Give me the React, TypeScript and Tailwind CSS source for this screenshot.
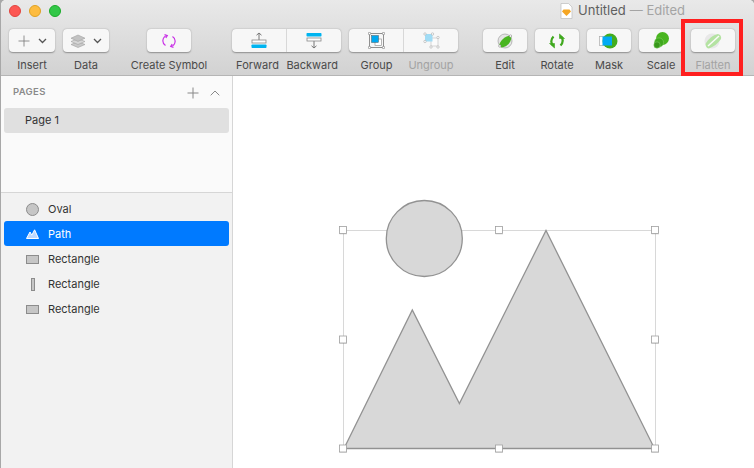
const font = { fontFamily: "Inter, 'Liberation Sans', sans-serif" };

function Btn({ w = 44, className = "", children }: { w?: number; className?: string; children?: React.ReactNode }) {
  return <div className={`h-[23px] bg-[#f7f7f7] rounded-[4px] shadow-[0_0.5px_1.5px_rgba(0,0,0,0.35)] flex items-center justify-center ${className}`} style={{ width: w }}>{children}</div>;
}

function Item({ label, dim, children, className = "" }: { label: string; dim?: boolean; children?: React.ReactNode; className?: string }) {
  return (
    <div className={`flex flex-col items-center w-[44px] ${className}`}>
      <Btn>{children}</Btn>
      <span className={`mt-[6px] text-[11px] leading-[14px] whitespace-nowrap ${dim ? "text-[#a3a3a3]" : "text-[#4a4a4a]"}`}>{label}</span>
    </div>
  );
}

function Chevron() {
  return <svg width="9" height="6" viewBox="0 0 9 6"><path d="M1 1l3.5 3.5L8 1" fill="none" stroke="#555" strokeWidth="1.3" /></svg>;
}

function Row({ label, icon, active }: { label: string; icon: React.ReactNode; active?: boolean }) {
  return (
    <div className={`h-[25px] mx-[3px] rounded-[3px] flex items-center pt-[1px] ${active ? "bg-[#007aff] text-white" : "text-[#333]"}`}>
      <div className="w-[13px] ml-[22px] flex justify-center">{icon}</div>
      <span className="ml-[9px] text-[11px]">{label}</span>
    </div>
  );
}

export default function App() {
  return (
    <div className="w-[754px] h-[468px] bg-[#a8a8a8] overflow-hidden pl-[1px]" style={font}>
      <div className="h-full rounded-t-[5px] overflow-hidden flex flex-col bg-white">
        <div className="h-[76px] shrink-0 bg-gradient-to-b from-[#e9e9e9] to-[#d2d2d2] border-b border-[#b5b5b5] relative">
          <div className="flex items-center gap-[8px] pl-[8px] h-[22px]">
            <div className="w-[12px] h-[12px] rounded-full bg-[#fc5753] border border-[#e0443e]" />
            <div className="w-[12px] h-[12px] rounded-full bg-[#fdbc40] border border-[#dea123]" />
            <div className="w-[12px] h-[12px] rounded-full bg-[#33c748] border border-[#1aab29]" />
            <div className="ml-auto mr-[69px] flex items-center text-[13px]">
              <svg width="13" height="16" viewBox="0 0 13 16" className="mr-[5px]">
                <path d="M1 .5h7.5L12 4v11.5H1z" fill="#fff" stroke="#bbb" strokeWidth=".7" />
                <path d="M3.5 6.5h6L11 8.5 6.5 13 2 8.5z" fill="#f5a623" />
              </svg>
              <span className="text-[#5f5f5f]">Untitled</span>
              <span className="text-[#a4a4a4] ml-[4px]">— Edited</span>
            </div>
          </div>
          <div className="flex pl-[8px] mt-[7px]">
            <div className="flex flex-col items-center w-[46px]">
              <Btn w={46} className="gap-[8px] pl-[1px]">
                <svg width="12" height="12" viewBox="0 0 12 12"><path d="M6 .5v11M.5 6h11" stroke="#777" strokeWidth=".8" /></svg>
                <Chevron />
              </Btn>
              <span className="mt-[6px] text-[11px] leading-[14px] text-[#4a4a4a]">Insert</span>
            </div>
            <div className="flex flex-col items-center w-[46px] ml-[8px]">
              <Btn w={46} className="gap-[7px]">
                <svg width="16" height="14" viewBox="0 0 16 14">
                  <path d="M8 7.5l7 3-7 3-7-3z" fill="#c8c8c8" stroke="#a0a0a0" strokeWidth=".6" />
                  <path d="M8 4.5l7 3-7 3-7-3z" fill="#d6d6d6" stroke="#a0a0a0" strokeWidth=".6" />
                  <path d="M8 1l7 3.2-7 3.2-7-3.2z" fill="#c2c2c2" stroke="#a0a0a0" strokeWidth=".6" />
                </svg>
                <Chevron />
              </Btn>
              <span className="mt-[6px] text-[11px] leading-[14px] text-[#4a4a4a]">Data</span>
            </div>
            <Item label="Create Symbol" className="ml-[38px]">
              <svg width="14" height="14" viewBox="0 0 14 14" fill="none" stroke="#c931e6" strokeWidth="1.2">
                <path d="M5 1.5A5.5 5.5 0 0 0 3.5 11.5" />
                <path d="M9 12.5A5.5 5.5 0 0 0 10.5 2.5" />
                <path d="M2.5 .6L5.3 1.5 3.8 4M11.5 13.4L8.7 12.5 10.2 10" />
              </svg>
            </Item>
            <div className="flex flex-col ml-[41px]">
              <div className="flex h-[23px] w-[109px] rounded-[4px] bg-[#f7f7f7] shadow-[0_0.5px_1.5px_rgba(0,0,0,0.35)]">
                <div className="w-[55px] border-r border-[#d8d8d8] flex items-center justify-center">
                  <svg width="16" height="17" viewBox="0 0 16 17">
                    <path d="M8 9V1M5.5 3.2L8 1l2.5 2.2" fill="none" stroke="#777" strokeWidth="1" />
                    <rect x="1" y="8" width="14" height="3" fill="#fff" stroke="#888" strokeWidth=".8" />
                    <rect x=".5" y="12.5" width="15" height="3.5" rx=".7" fill="#00b4f0" />
                  </svg>
                </div>
                <div className="flex-1 flex items-center justify-center">
                  <svg width="16" height="17" viewBox="0 0 16 17">
                    <path d="M8 8v8M5.5 13.8L8 16l2.5-2.2" fill="none" stroke="#777" strokeWidth="1" />
                    <rect x="1" y="6" width="14" height="3" fill="#fff" stroke="#888" strokeWidth=".8" />
                    <rect x=".5" y="1" width="15" height="3.5" rx=".7" fill="#00b4f0" />
                  </svg>
                </div>
              </div>
              <div className="flex mt-[6px] text-[11px] leading-[14px] text-[#4a4a4a]">
                <span className="w-[51px] text-center">Forward</span>
                <span className="w-[58px] text-right pr-[3px]">Backward</span>
              </div>
            </div>
            <div className="flex flex-col ml-[8px]">
              <div className="flex h-[23px] w-[109px] rounded-[4px] bg-[#f7f7f7] shadow-[0_0.5px_1.5px_rgba(0,0,0,0.35)]">
                <div className="w-[55px] border-r border-[#d8d8d8] flex items-center justify-center">
                  <svg width="17" height="17" viewBox="0 0 17 17">
                    <rect x="1.5" y="1.5" width="14" height="14" fill="none" stroke="#777" strokeWidth=".8" />
                    <rect x="7" y="7" width="6.5" height="6.5" fill="#fff" stroke="#999" strokeWidth=".7" />
                    <rect x="3.5" y="3.5" width="7" height="7" fill="#00a8f0" stroke="#444" strokeWidth=".4" />
                    {[[1.5, 1.5], [15.5, 1.5], [1.5, 15.5], [15.5, 15.5]].map(([x, y]) => <circle key={x * 10 + y} cx={x} cy={y} r="1.2" fill="#fff" stroke="#666" strokeWidth=".6" />)}
                  </svg>
                </div>
                <div className="flex-1 flex items-center justify-center">
                  <svg width="17" height="17" viewBox="0 0 17 17" opacity=".5">
                    <rect x="8" y="6" width="7" height="8" fill="#fff" stroke="#999" strokeWidth=".7" />
                    <rect x="2" y="2" width="7.5" height="7.5" fill="#4cc3f5" />
                    {[[2, 2], [9.5, 2], [2, 9.5], [15, 5.5], [8, 15], [15, 15]].map(([x, y]) => <circle key={x * 10 + y} cx={x} cy={y} r="1.2" fill="#fff" stroke="#666" strokeWidth=".6" />)}
                  </svg>
                </div>
              </div>
              <div className="flex mt-[6px] text-[11px] leading-[14px]">
                <span className="w-[55px] text-center text-[#4a4a4a]">Group</span>
                <span className="w-[54px] text-center text-[#a3a3a3]">Ungroup</span>
              </div>
            </div>
            <Item label="Edit" className="ml-[25px]">
              <svg width="16" height="16" viewBox="0 0 16 16">
                <circle cx="8" cy="8" r="7" fill="#e4e4e4" stroke="#a0a0a0" strokeWidth=".7" />
                <path d="M2 13C2.5 8 8.5 2.5 14 2.5 15.5 8.5 10 14.5 4 14.5z" fill="#49b520" />
                <circle cx="2.8" cy="13" r="1.2" fill="#fff" stroke="#777" strokeWidth=".5" />
                <circle cx="13.5" cy="3" r="1.2" fill="#fff" stroke="#777" strokeWidth=".5" />
              </svg>
            </Item>
            <Item label="Rotate" className="ml-[8px]">
              <svg width="16" height="16" viewBox="0 0 16 16" fill="none" stroke="#3fa81e" strokeWidth="2.2">
                <path d="M4.5 3.5C2 6 2 9.5 3.5 12" />
                <path d="M11.5 12.5C14 10 14 6.5 12.5 4" />
                <path d="M.5 10.5h5v4.5zM15.5 5.5h-5V1z" fill="#3fa81e" strokeWidth=".6" />
              </svg>
            </Item>
            <Item label="Mask" className="ml-[8px]">
              <svg width="20" height="16" viewBox="0 0 20 16" className="ml-[-1px]">
                <rect x=".5" y="3.5" width="9" height="9" fill="#fff" stroke="#aaa" strokeWidth=".7" />
                <circle cx="11" cy="8" r="7.5" fill="#43ad1f" />
                <rect x="3.5" y="3.5" width="9.5" height="9" fill="#00aaf5" />
              </svg>
            </Item>
            <Item label="Scale" className="ml-[8px]">
              <svg width="16" height="17" viewBox="0 0 16 17">
                <circle cx="9.5" cy="6.5" r="6.5" fill="#49b520" />
                <circle cx="6" cy="10.5" r="4.6" fill="#3fa81e" stroke="#8ad470" strokeWidth=".5" />
                <circle cx="4" cy="13" r="3.2" fill="#37981a" stroke="#8ad470" strokeWidth=".5" />
              </svg>
            </Item>
            <Item label="Flatten" dim className="ml-[8px]">
              <svg width="18" height="16" viewBox="0 0 18 16" opacity=".55">
                <circle cx="8" cy="8" r="7.5" fill="#dcdcdc" />
                <path d="M1.5 11C4 6 9 2 14 1c2.5.5 3.5 2.5 3 5-3 4.500-7 7.500-12 9.500C3 15.500 1.500 13.500 1.500 11z" fill="#7fd35e" />
                <path d="M4 13L15 3" stroke="#fff" strokeWidth="1.500" />
              </svg>
            </Item>
          </div>
          <div className="absolute left-[680px] top-[19px] w-[62px] h-[57px] border-[4px] border-[#ff1f1f]" />
        </div>
        <div className="flex-1 flex min-h-0">
          <div className="w-[232px] shrink-0 border-r border-[#d6d6d6] flex flex-col">
            <div className="h-[117px] shrink-0 bg-[#fafafa] border-b border-[#d6d6d6]">
              <div className="h-[32px] flex items-center pl-[12px] pr-[12px] pt-[1px] text-[#8a8a8a]">
                <span className="text-[9.5px] font-semibold tracking-[0.35px]">PAGES</span>
                <svg width="12" height="12" viewBox="0 0 12 12" className="ml-auto"><path d="M6 .5v11M.5 6h11" stroke="#888" strokeWidth="1" /></svg>
                <svg width="10" height="6" viewBox="0 0 10 6" className="ml-[11px]"><path d="M.7 5.300L5 1l4.300 4.300" fill="none" stroke="#888" strokeWidth="1" /></svg>
              </div>
              <div className="mx-[3px] h-[25px] rounded-[3px] bg-[#e0e0e0] flex items-center pl-[21px] text-[11px] text-[#333]">Page 1</div>
            </div>
            <div className="flex-1 bg-[#f2f2f2] pt-[3px]">
              <Row label="Oval" icon={<div className="w-[13px] h-[13px] rounded-full bg-[#c6c6c6] border border-[#8c8c8c]" />} />
              <Row label="Path" active icon={<svg width="13" height="10" viewBox="0 0 13 10"><path d="M.5 9.500L4 3l1.800 3.200L8.600.8 12.500 9.500z" fill="#bcd8ff" stroke="#fff" strokeWidth="1" /></svg>} />
              <Row label="Rectangle" icon={<div className="w-[13px] h-[9px] bg-[#c6c6c6] border border-[#8c8c8c]" />} />
              <Row label="Rectangle" icon={<div className="w-[4px] h-[13px] bg-[#c6c6c6] border border-[#8c8c8c]" />} />
              <Row label="Rectangle" icon={<div className="w-[13px] h-[9px] bg-[#c6c6c6] border border-[#8c8c8c]" />} />
            </div>
          </div>
          <div className="flex-1 bg-white">
            <svg width="521" height="392" viewBox="233 76 521 392" className="block">
              <rect x="343.500" y="230.500" width="312" height="218" fill="none" stroke="#d8d8d8" />
              <circle cx="424.300" cy="238.500" r="38" fill="#d8d8d8" stroke="#929292" strokeWidth="1.300" />
              <path d="M344 448.500L412.300 310 459.400 403.500 546 230.500 654.500 448.500z" fill="#d8d8d8" stroke="#929292" strokeWidth="1.300" />
              {[343, 499, 655].flatMap((x) => [230, 339.5, 448.5].filter((y) => !(x === 499 && y === 339.5)).map((y) => (
                <g key={`${x}-${y}`}>
                  <rect x={x - 3.5} y={y - 3} width="7.500" height="7.500" fill="#000" opacity=".12" />
                  <rect x={x - 3.5} y={y - 3.5} width="7" height="7" fill="#fff" stroke="#a0a0a0" strokeWidth="0.800" />
                </g>
              )))}
            </svg>
          </div>
        </div>
      </div>
    </div>
  );
}
